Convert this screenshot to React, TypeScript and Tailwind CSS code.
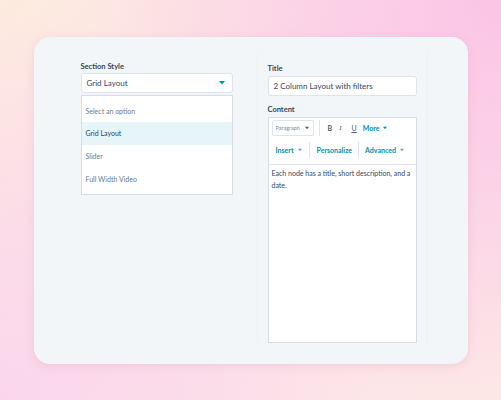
import React from "react";

const Caret = ({ className = "" }: { className?: string }) => (
  <svg width="6" height="4" viewBox="0 0 6 4" className={className}>
    <path d="M0 0 L6 0 L3 3.5 Z" fill="currentColor" />
  </svg>
);

export default function App() {
  return (
    <div
      className="w-[501px] h-[400px] flex items-center justify-center bg-[radial-gradient(circle_at_100%_0%,#fbc5e6_0%,rgba(251,197,230,0)_65%),radial-gradient(circle_at_0%_100%,#fbd6eb_0%,rgba(251,214,235,0)_60%),linear-gradient(135deg,#fdebdf_0%,#fbe0ea_50%,#fce9e6_100%)]"
      style={{ fontFamily: "Lato, 'Open Sans', sans-serif" }}
    >
      <div className="w-[434px] h-[327px] rounded-[16px] bg-[#f2f6f9] shadow-[0_2px_8px_rgba(210,150,175,0.25)] flex pl-[47px] pt-[16px]">
        {/* Left column */}
        <div className="w-[152px] pt-[9px] flex flex-col">
          <div className="text-[7.5px] font-bold text-[#33475b] leading-[10px] h-[11px]">Section Style</div>
          <div className="h-[20px] bg-white border border-[#dfe3eb] rounded-[3px] flex items-center justify-between pl-[5px] pr-[7px]">
            <span className="text-[8px] text-[#33475b]">Grid Layout</span>
            <Caret className="text-[#0091ae]" />
          </div>
          <div className="mt-[2px] h-[100px] bg-white border border-[#d6dde6] flex flex-col pt-[5px]">
            <div className="h-[21px] flex items-center pl-[4px] text-[7px] text-[#6b7a89]">Select an option</div>
            <div className="h-[23px] flex items-center pl-[4px] text-[7px] text-[#33475b] bg-[#e5f5f8]">Grid Layout</div>
            <div className="h-[23px] flex items-center pl-[4px] text-[7px] text-[#6b7a89]">Slider</div>
            <div className="h-[23px] flex items-center pl-[4px] text-[7px] text-[#6b7a89]">Full Width Video</div>
          </div>
        </div>

        {/* Right panel */}
        <div className="ml-[24px] w-[171px] h-[290px] border-x border-[#edf1f5] px-[10px] pt-[11px] flex flex-col">
          <div className="text-[7.5px] font-bold text-[#33475b] leading-[10px] h-[12px]">Title</div>
          <div className="h-[20px] bg-white border border-[#dfe3eb] rounded-[3px] flex items-center pl-[5px]">
            <span className="text-[8px] text-[#33475b]">2 Column Layout with filters</span>
          </div>
          <div className="mt-[9px] text-[7.5px] font-bold text-[#33475b] leading-[10px] h-[12px]">Content</div>
          <div className="flex-1 bg-white border border-[#d6dde6] flex flex-col">
            <div className="border-b border-[#dfe3eb] flex flex-col px-[3px] pt-[2px]">
              <div className="h-[17px] flex items-center">
                <div className="w-[42px] h-[16px] border border-[#dfe3eb] rounded-[2px] flex items-center justify-between px-[3px] text-[#7c8b9a]">
                  <span className="text-[5.5px]">Paragraph</span>
                  <Caret className="text-[#425b76] scale-75" />
                </div>
                <div className="w-px h-[16px] bg-[#dfe3eb] ml-[5px]" />
                <span className="ml-[8px] text-[7px] font-bold text-[#425b76]">B</span>
                <span className="ml-[7px] text-[7px] italic text-[#425b76]" style={{ fontFamily: "'Liberation Serif', serif" }}>I</span>
                <span className="ml-[10px] text-[7px] underline text-[#425b76]">U</span>
                <span className="ml-[6px] text-[7px] font-bold text-[#0091ae]">More</span>
                <Caret className="ml-[3px] text-[#0091ae] scale-75" />
              </div>
              <div className="h-[27px] flex items-center">
                <span className="ml-[4px] text-[7px] font-bold text-[#0091ae]">Insert</span>
                <Caret className="ml-[3px] text-[#7c98b6] scale-75" />
                <div className="w-px h-[16px] bg-[#dfe3eb] ml-[6px]" />
                <span className="ml-[7px] text-[7px] font-bold text-[#0091ae]">Personalize</span>
                <div className="w-px h-[16px] bg-[#dfe3eb] ml-[6px]" />
                <span className="ml-[6px] text-[7px] font-bold text-[#0091ae]">Advanced</span>
                <Caret className="ml-[3px] text-[#7c98b6] scale-75" />
              </div>
            </div>
            <div className="px-[3px] pt-[2px] text-[7px] leading-[12px] text-[#33475b]">
              Each node has a title, short description, and a date.
            </div>
          </div>
        </div>
      </div>
    </div>
  );
}
